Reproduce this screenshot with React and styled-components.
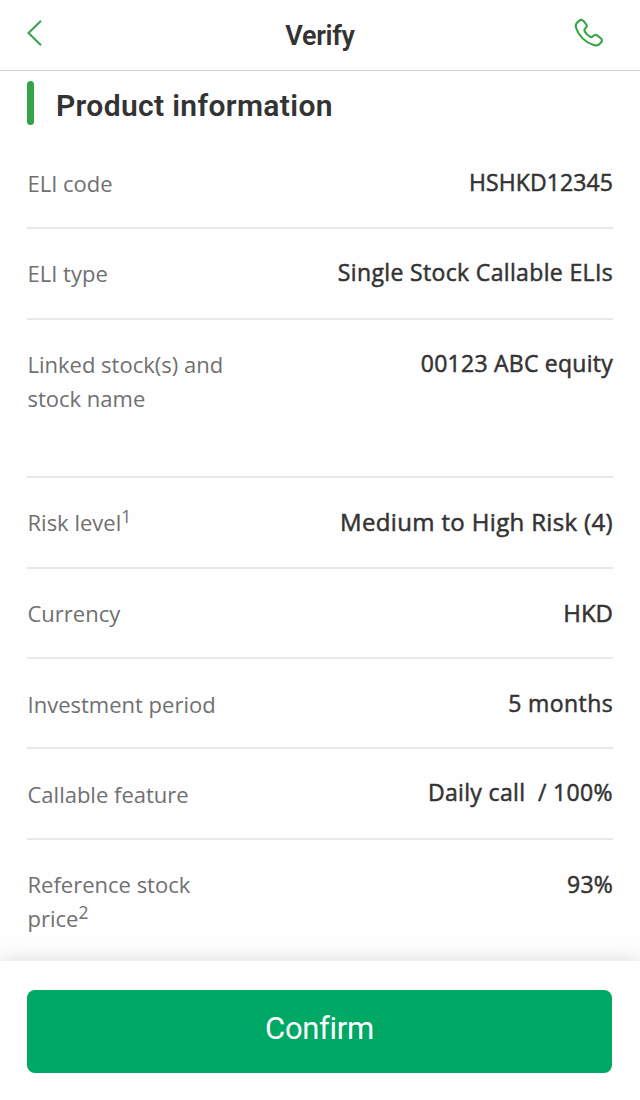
import React from 'react';
import styled, { createGlobalStyle } from 'styled-components';

const GlobalStyle = createGlobalStyle`
  * {
    box-sizing: border-box;
  }
  body {
    margin: 0;
    background: #fff;
  }
`;

const Screen = styled.div`
  display: flex;
  flex-direction: column;
  width: 640px;
  height: 1100px;
  overflow: hidden;
  background: #fefefe;
  color: #333;
  font-family: 'Open Sans', sans-serif;
`;

const Header = styled.header`
  display: flex;
  flex: none;
  justify-content: space-between;
  height: 71px;
  padding: 18px 36px 0 26px;
  border-bottom: 1px solid #d2d2d2;
`;

const Title = styled.h1`
  margin: 0;
  padding-left: 10px;
  font: 600 27px/36px Roboto, sans-serif;
  letter-spacing: -0.3px;
`;

const IconButton = styled.button`
  display: flex;
  width: 30px;
  height: 32px;
  padding: 0;
  border: 0;
  background: none;
  color: #35a446;
`;

const Content = styled.main`
  flex: none;
  height: 890px;
  padding: 10px 27px 0;
  overflow: hidden;
`;

const Heading = styled.h2`
  display: flex;
  align-items: center;
  height: 44px;
  margin: 0 0 13px;
  padding-top: 6px;
  font: 600 30px/44px Roboto, sans-serif;
  letter-spacing: 0.35px;

  &::before {
    content: '';
    width: 7px;
    height: 44px;
    margin: -6px 22px 0 0;
    border-radius: 4px;
    background: #35a446;
  }
`;

const Row = styled.div`
  display: flex;
  justify-content: space-between;
  height: ${props => props.$height}px;
  padding-top: ${props => props.$top || 27}px;
  border-bottom: 2px solid #e8e8e8;
`;

const Label = styled.div`
  width: 210px;
  padding-left: 0.5px;
  color: #707070;
  font-size: 22px;
  line-height: 34px;
  white-space: pre-line;

  sup {
    font-size: 17.5px;
    line-height: 0;
    vertical-align: 8px;
  }
`;

const Value = styled.div`
  margin-top: ${props => props.$shift || 0}px;
  font-size: ${props => props.$size || 23}px;
  letter-spacing: ${props => props.$tracking || 0}px;
  line-height: 34px;
  white-space: pre;
  -webkit-text-stroke: 0.5px #333;
`;

const Footer = styled.footer`
  flex: 1;
  padding: 29px 28px 0 27px;
  background: #fff;
  box-shadow: 0 0 20px rgba(0, 0, 0, 0.15);
`;

const Confirm = styled.button`
  display: block;
  width: 100%;
  height: 83px;
  padding: 0 0 6px;
  border: 0;
  border-radius: 8px;
  background: #00a865;
  color: #fff;
  font: 400 31px/40px Roboto, sans-serif;
  letter-spacing: -0.3px;
`;

const rows = [
  { label: 'ELI code', value: 'HSHKD12345', height: 91, top: 28, shift: -1, tracking: 0.1 },
  { label: 'ELI type', value: 'Single Stock Callable ELIs', height: 91, shift: -1, tracking: 0.35 },
  { label: 'Linked stock(s) and\nstock name', value: '00123 ABC equity', height: 158, shift: -1, tracking: 0.25 },
  { label: 'Risk level', note: '1', value: 'Medium to High Risk (4)', height: 91, size: 24, tracking: 0.35 },
  { label: 'Currency', value: 'HKD', height: 90, size: 24 },
  { label: 'Investment period', value: '5 months', height: 90, top: 28, shift: -1, tracking: 0.4 },
  { label: 'Callable feature', value: 'Daily call  / 100%', height: 91, top: 28, shift: -2, tracking: 0.35 },
  { label: 'Reference stock\nprice', note: '2', value: '93%', height: 158, tracking: 0.2 },
];

const BackIcon = () => (
  <svg width="18" height="30" viewBox="0 0 18 30" fill="none" stroke="currentColor" strokeWidth="2">
    <path d="M15 2.8 2.5 15 15 27.2" />
  </svg>
);

const PhoneIcon = () => (
  <svg width="30" height="30" viewBox="0 0 30 30" fill="none" stroke="currentColor" strokeWidth="2.1" strokeLinejoin="round">
    <path d="M5.3 2.6C6.8 1.4 8.6 1.8 9.7 3.2L12.3 6.6C13.2 7.9 12.7 9 11.6 10C10.2 11.3 10 12 10.8 13.4C12 15.6 13.8 17.4 16 18.7C17.3 19.5 18.2 19.2 19.4 17.9C20.5 16.7 21.8 16.4 23.1 17.4L26.5 20C28.1 21.3 28.3 23.1 27 24.7C25.4 26.8 22.7 28.2 19.7 27.1C11.2 24.2 4.8 17.7 2.1 10C1.1 7 2.8 4.3 5.3 2.6Z" />
  </svg>
);

const App = () => (
  <Screen>
    <GlobalStyle />
    <Header>
      <IconButton aria-label="Back"><BackIcon /></IconButton>
      <Title>Verify</Title>
      <IconButton aria-label="Call"><PhoneIcon /></IconButton>
    </Header>
    <Content>
      <Heading>Product information</Heading>
      {rows.map(row => (
        <Row key={row.label} $height={row.height} $top={row.top}>
          <Label>
            {row.label}
            {row.note && <sup>{row.note}</sup>}
          </Label>
          <Value $shift={row.shift} $size={row.size} $tracking={row.tracking}>{row.value}</Value>
        </Row>
      ))}
    </Content>
    <Footer>
      <Confirm>Confirm</Confirm>
    </Footer>
  </Screen>
);

export default App;
